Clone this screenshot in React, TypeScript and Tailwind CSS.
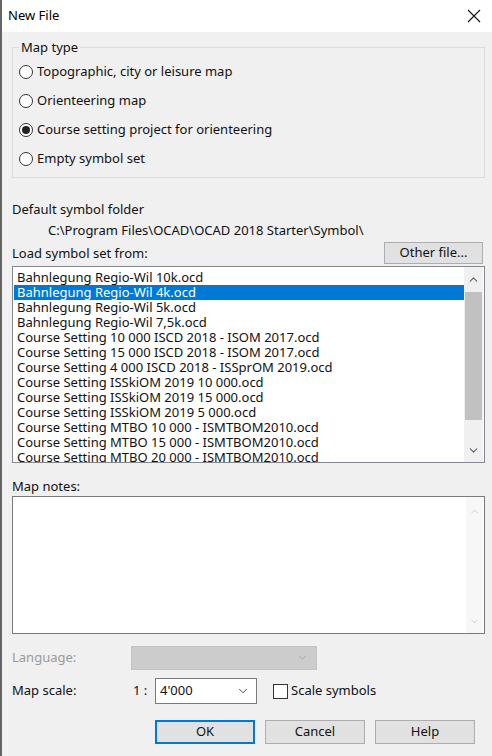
import { ChevronDown, ChevronUp } from 'lucide-react'

const font = { fontFamily: '"Noto Sans", "Open Sans", sans-serif' }

const files = [
  'Bahnlegung Regio-Wil 10k.ocd',
  'Bahnlegung Regio-Wil 4k.ocd',
  'Bahnlegung Regio-Wil 5k.ocd',
  'Bahnlegung Regio-Wil 7,5k.ocd',
  'Course Setting 10 000 ISCD 2018 - ISOM 2017.ocd',
  'Course Setting 15 000 ISCD 2018 - ISOM 2017.ocd',
  'Course Setting 4 000 ISCD 2018 - ISSprOM 2019.ocd',
  'Course Setting ISSkiOM 2019 10 000.ocd',
  'Course Setting ISSkiOM 2019 15 000.ocd',
  'Course Setting ISSkiOM 2019 5 000.ocd',
  'Course Setting MTBO 10 000 - ISMTBOM2010.ocd',
  'Course Setting MTBO 15 000 - ISMTBOM2010.ocd',
  'Course Setting MTBO 20 000 - ISMTBOM2010.ocd',
]

const mapTypes = [
  'Topographic, city or leisure map',
  'Orienteering map',
  'Course setting project for orienteering',
  'Empty symbol set',
]

const Radio = ({ checked }: { checked?: boolean }) => (
  <span className="w-[14px] h-[14px] rounded-full border border-[#333] bg-white flex items-center justify-center shrink-0">
    {checked && <span className="w-[8px] h-[8px] rounded-full bg-[#222]" />}
  </span>
)

const Button = ({ label, primary }: { label: string; primary?: boolean }) => (
  <div
    className={
      'w-[100px] h-[24px] flex items-center justify-center bg-[#e1e1e1] text-[13px] text-[#111] ' +
      (primary ? 'border-2 border-[#0078d7]' : 'border border-[#adadad]')
    }
  >
    {label}
  </div>
)

export default function App() {
  return (
    <div className="w-[492px] h-[756px] bg-[#f0f0f0] border-l-2 border-[#666] flex flex-col text-[13px] text-[#111] overflow-hidden" style={font}>
      {/* title bar */}
      <div className="h-[32px] bg-white flex items-center justify-between pl-[6px] pr-[10px] shrink-0">
        <span className="text-[13px] text-black">New File</span>
        <svg width="14" height="14" viewBox="0 0 14 14" className="mr-[1px]">
          <path d="M1 1 L13 13 M13 1 L1 13" stroke="#111" strokeWidth="1.1" />
        </svg>
      </div>

      <div className="flex flex-col pl-[10px] pr-[7px] pt-[8px]">
        {/* map type */}
        <div className="relative border border-[#dcdcdc] h-[131px] mt-[7px] pt-[15px] pl-[6px] flex flex-col gap-[11px]">
          <span className="absolute -top-[10px] left-[6px] bg-[#f0f0f0] px-[2px] leading-[18px]">Map type</span>
          {mapTypes.map((t, i) => (
            <div key={t} className="flex items-center gap-[4px] h-[18px]">
              <Radio checked={i === 2} />
              <span>{t}</span>
            </div>
          ))}
        </div>

        <div className="mt-[22px] leading-[18px]">Default symbol folder</div>
        <div className="mt-[3px] pl-[36px] leading-[18px]">C:\Program Files\OCAD\OCAD 2018 Starter\Symbol\</div>

        <div className="flex items-end justify-between mt-[3px] pr-[2px]">
          <span className="leading-[18px] mb-[2px]">Load symbol set from:</span>
          <div className="w-[99px] h-[22px] flex items-center justify-center bg-[#e1e1e1] border border-[#adadad]">Other file...</div>
        </div>

        {/* symbol list */}
        <div className="mt-[2px] h-[197px] border border-[#828790] bg-white flex overflow-hidden">
          <div className="flex-1 pt-[3px] pl-[1px] flex flex-col">
            {files.map((f, i) => (
              <div
                key={f}
                className={'h-[15px] leading-[15px] pl-[3px] whitespace-nowrap ' + (i === 1 ? 'bg-[#0078d7] text-white' : '')}
              >
                {f}
              </div>
            ))}
          </div>
          <div className="w-[19px] bg-[#f0f0f0] flex flex-col items-center shrink-0 mr-[1px]">
            <ChevronUp size={13} strokeWidth={2} className="text-[#606060] mt-[6px]" />
            <div className="w-[17px] h-[128px] bg-[#c1c1c1] mt-[6px]" />
            <div className="flex-1" />
            <ChevronDown size={13} strokeWidth={2} className="text-[#606060] mb-[5px]" />
          </div>
        </div>

        <div className="mt-[14px] leading-[18px]">Map notes:</div>
        <div className="mt-[1px] h-[138px] border border-[#7a7a7a] bg-white flex">
          <div className="flex-1" />
          <div className="w-[17px] bg-[#f7f7f7] flex flex-col items-center mr-[1px]">
            <ChevronUp size={11} strokeWidth={2} className="text-[#c8c8c8] mt-[9px]" />
            <div className="flex-1" />
            <ChevronDown size={11} strokeWidth={2} className="text-[#c8c8c8] mb-[6px]" />
          </div>
        </div>

        {/* language */}
        <div className="flex items-center mt-[11px] h-[25px]">
          <span className="w-[119px] text-[#9a9a9a]">Language:</span>
          <div className="w-[186px] h-[24px] bg-[#cccccc] border border-[#c4c4c4] flex items-center justify-end pr-[7px]">
            <ChevronDown size={13} strokeWidth={1.5} className="text-[#a0a0a0]" />
          </div>
        </div>

        {/* scale */}
        <div className="flex items-center mt-[8px] h-[26px]">
          <span className="w-[121px]">Map scale:</span>
          <span className="w-[22px]">1 :</span>
          <div className="w-[102px] h-[26px] bg-white border border-[#7a7a7a] flex items-center justify-between pl-[4px] pr-[6px]">
            <span>4'000</span>
            <ChevronDown size={14} strokeWidth={1.5} className="text-[#333]" />
          </div>
          <div className="ml-[16px] flex items-center gap-[3px]">
            <span className="w-[15px] h-[15px] border border-[#333] bg-white" />
            <span>Scale symbols</span>
          </div>
        </div>

        <div className="flex gap-[10px] mt-[16px] pl-[143px]">
          <Button label="OK" primary />
          <Button label="Cancel" />
          <Button label="Help" />
        </div>
      </div>
    </div>
  )
}
